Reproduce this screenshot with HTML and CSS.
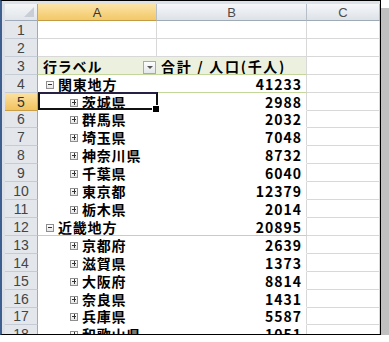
FILE: index.html
```html
<!DOCTYPE html>
<html lang="ja">
<head>
  <meta charset="UTF-8">
  <title>ピボットテーブル - 人口</title>
  <link rel="stylesheet" href="styles.css">
</head>
<body>

  <div class="frame">
    <div class="sheet">
      <div class="corner"><span class="tri"></span></div>
      <div class="ch sel">A</div>
      <div class="ch">B</div>
      <div class="ch">C</div>

      <div class="rh">1</div><div class="c"></div><div class="c"></div><div class="c"></div>
      <div class="rh">2</div><div class="c"></div><div class="c"></div><div class="c"></div>

      <div class="rh">3</div>
      <div class="c ph lbl">行ラベル<span class="drop"></span></div>
      <div class="c ph tot">合計 / 人口(千人)</div>
      <div class="c"></div>

      <div class="rh">4</div>
      <div class="c pa sub"><span class="box minus"></span>関東地方</div>
      <div class="c pb sub">41233</div>
      <div class="c"></div>

      <div class="rh sel">5</div>
      <div class="c pa item cur"><span class="box plus"></span>茨城県</div>
      <div class="c pb">2988</div>
      <div class="c"></div>

      <div class="rh">6</div>
      <div class="c pa item"><span class="box plus"></span>群馬県</div>
      <div class="c pb">2032</div>
      <div class="c"></div>

      <div class="rh">7</div>
      <div class="c pa item"><span class="box plus"></span>埼玉県</div>
      <div class="c pb">7048</div>
      <div class="c"></div>

      <div class="rh">8</div>
      <div class="c pa item"><span class="box plus"></span>神奈川県</div>
      <div class="c pb">8732</div>
      <div class="c"></div>

      <div class="rh">9</div>
      <div class="c pa item"><span class="box plus"></span>千葉県</div>
      <div class="c pb">6040</div>
      <div class="c"></div>

      <div class="rh">10</div>
      <div class="c pa item"><span class="box plus"></span>東京都</div>
      <div class="c pb">12379</div>
      <div class="c"></div>

      <div class="rh">11</div>
      <div class="c pa item"><span class="box plus"></span>栃木県</div>
      <div class="c pb">2014</div>
      <div class="c"></div>

      <div class="rh">12</div>
      <div class="c pa sub"><span class="box minus"></span>近畿地方</div>
      <div class="c pb sub">20895</div>
      <div class="c"></div>

      <div class="rh">13</div>
      <div class="c pa item"><span class="box plus"></span>京都府</div>
      <div class="c pb">2639</div>
      <div class="c"></div>

      <div class="rh">14</div>
      <div class="c pa item"><span class="box plus"></span>滋賀県</div>
      <div class="c pb">1373</div>
      <div class="c"></div>

      <div class="rh">15</div>
      <div class="c pa item"><span class="box plus"></span>大阪府</div>
      <div class="c pb">8814</div>
      <div class="c"></div>

      <div class="rh">16</div>
      <div class="c pa item"><span class="box plus"></span>奈良県</div>
      <div class="c pb">1431</div>
      <div class="c"></div>

      <div class="rh">17</div>
      <div class="c pa item"><span class="box plus"></span>兵庫県</div>
      <div class="c pb">5587</div>
      <div class="c"></div>

      <div class="rh">18</div>
      <div class="c pa item"><span class="box plus"></span>和歌山県</div>
      <div class="c pb">1051</div>
      <div class="c"></div>
    </div>
  </div>

</body>
</html>
```

FILE: styles.css
```css
* {
  box-sizing: border-box;
}

body {
  margin: 0;
  background-color: #fff;
}

.frame {
  width: 381px;
  height: 335px;
  border: 1px solid #000;
  border-left: 2px solid #3d5f8f;
  padding: 3px 0 0 3px;
  background-color: #dde2e8;
  box-shadow: 8px 8px 0 #c0c0c0;
  overflow: hidden;
}

.sheet {
  display: grid;
  grid-template-columns: 33px 119px 150px 73px;
  grid-template-rows: 17px;
  grid-auto-rows: 17.92px;
  height: 330px;
  overflow: hidden;
  background-color: #fff;
  font-family: "Noto Sans CJK JP", sans-serif;
}

/* headers */
.corner {
  position: relative;
  background: linear-gradient(#f4f6f8, #e1e5ea);
  border-right: 1px solid #9eaab8;
  border-bottom: 1px solid #9eaab8;
}

.tri {
  position: absolute;
  right: 3px;
  bottom: 3px;
  width: 0;
  height: 0;
  border-left: 10px solid transparent;
  border-bottom: 10px solid #c9ced6;
}

.ch {
  display: flex;
  justify-content: center;
  align-items: center;
  background: linear-gradient(#f6f7f9, #dde2e8);
  border-right: 1px solid #b6bec8;
  border-bottom: 1px solid #9eaab8;
  font-family: "Liberation Sans", sans-serif;
  font-size: 13px;
  color: #4c4c4c;
}

.ch.sel {
  background: linear-gradient(#fbe4a8, #f3c867);
  border-bottom-color: #c29b43;
  color: #333;
}

.rh {
  display: flex;
  justify-content: center;
  align-items: center;
  background-color: #e3e7ec;
  border-right: 1px solid #9eaab8;
  border-bottom: 1px solid #c5ccd5;
  font-family: "Liberation Sans", sans-serif;
  font-size: 14px;
  line-height: 16px;
  color: #444;
  padding-top: 1px;
}

.rh.sel {
  background: linear-gradient(#fbe2a2, #f2c25d);
  border-bottom-color: #c9a04a;
  color: #333;
}

/* cells */
.c {
  display: flex;
  align-items: flex-end;
  overflow: hidden;
  border-right: 1px solid #d8d8d8;
  border-bottom: 1px solid #d8d8d8;
  font-size: 14px;
  font-weight: 700;
  color: #000;
  line-height: 15px;
  white-space: nowrap;
  letter-spacing: 0.8px;
}

.ph {
  background-color: #ebf1de;
  border-bottom-color: #c4d79b;
}

.lbl {
  position: relative;
  padding-left: 5px;
  border-right: none;
}

.tot {
  padding-left: 4px;
  letter-spacing: 1.7px;
}

.drop {
  position: absolute;
  right: 1px;
  top: 4px;
  width: 13px;
  height: 13px;
  border: 1px solid #a4abb4;
  background: linear-gradient(#fdfdfd, #e4e7eb);
}

.drop::after {
  content: "";
  position: absolute;
  left: 3px;
  top: 4px;
  border-left: 3px solid transparent;
  border-right: 3px solid transparent;
  border-top: 3px solid #555;
}

.pa {
  border-right: none;
  border-bottom-color: transparent;
}

.pb {
  justify-content: flex-end;
  padding-right: 4px;
  border-bottom-color: transparent;
  letter-spacing: 1px;
}

.pa.sub,
.pb.sub {
  border-bottom-color: #c4d79b;
}

.pa.sub {
  padding-left: 8px;
}

.pa.item {
  padding-left: 32px;
}

.box {
  position: relative;
  flex: none;
  width: 8px;
  height: 8px;
  margin: 0 4px 3px 0;
  border: 1px solid #8e8e8e;
  background: linear-gradient(#fff, #e6e6e6);
}

.box::before,
.box::after {
  content: "";
  position: absolute;
  background-color: #333;
}

.box::before {
  left: 1px;
  top: 2px;
  width: 4px;
  height: 1px;
}

.plus::after {
  left: 3px;
  top: 0;
  width: 1px;
  height: 5px;
}

.minus::after {
  display: none;
}

/* active cell */
.cur {
  position: relative;
  overflow: visible;
}

.cur::after {
  content: "";
  position: absolute;
  left: 0;
  top: -1px;
  right: -1px;
  bottom: 0;
  border: 2px solid #111;
  border-top-color: #272045;
}

.cur::before {
  content: "";
  position: absolute;
  right: -3px;
  bottom: -3px;
  width: 6px;
  height: 6px;
  background-color: #000;
  border: 1px solid #fff;
  z-index: 1;
}
```
